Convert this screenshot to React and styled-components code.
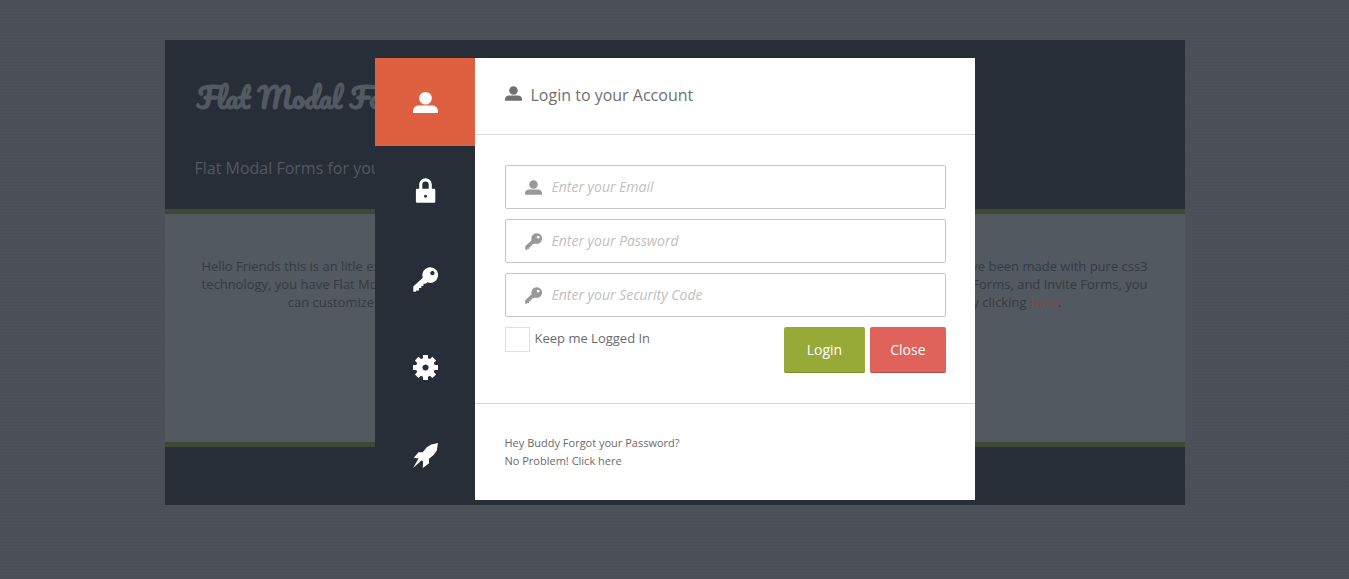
import React from "react";
import styled, { createGlobalStyle, css } from "styled-components";

const GlobalStyle = createGlobalStyle`
  * { box-sizing: border-box; }
  html { min-height: 100%; }
  body {
    margin: 0;
    min-height: 100vh;
    background-color: #4b5159;
    background-image: repeating-linear-gradient(0deg, rgba(0, 0, 0, 0.02) 0 1px, transparent 1px 3px);
    color: #343b44;
    font: 13px/18px "Open Sans", "Noto Sans", sans-serif;
  }
`;

const Page = styled.main`
  max-width: 1020px;
  margin: 40px auto;
`;

const PageHeader = styled.header`
  padding: 32px 30px 30px;
  background: #282e38;
  color: #525960;
`;

const Brand = styled.h1`
  margin: 0 0 33px;
  padding-left: 2px;
  font: 700 28px/52px Pacifico, cursive;
`;

const Tagline = styled.h2`
  margin: 0;
  font-size: 16px;
  font-weight: 400;
  line-height: 22px;
`;

const PageBody = styled.section`
  min-height: 238px;
  padding: 43px 30px;
  border: solid #3d4835;
  border-width: 5px 0;
  background: #525960;
  text-align: center;
`;

const Intro = styled.p`
  margin: 0;
`;

const IntroLink = styled.a`
  color: #78494c;
  text-decoration: none;
`;

const PageFooter = styled.footer`
  height: 58px;
  background: #282e38;
`;

const Overlay = styled.div`
  position: fixed;
  inset: 0;
  display: flex;
  justify-content: center;
  align-items: flex-start;
  padding-top: 58px;
`;

const Modal = styled.div`
  display: flex;
  width: 600px;
  max-width: 100%;
  background: #fff;
  color: #6b6b6b;
`;

const Tabs = styled.nav`
  display: flex;
  flex: 0 0 100px;
  flex-direction: column;
  background: #282e38;
`;

const Tab = styled.button`
  display: flex;
  flex: 1;
  align-items: center;
  justify-content: center;
  padding: 0 0 0 1px;
  border: 0;
  background: ${(p) => (p.$active ? "#df6041" : "transparent")};
  color: #fff;
  cursor: pointer;
`;

const Glyph = styled.svg`
  display: block;
  flex: none;
  width: ${(p) => p.$size}px;
  height: ${(p) => p.$size}px;
  fill: currentColor;
`;

const Panel = styled.section`
  flex: 1;
  min-width: 0;
`;

const PanelHeader = styled.header`
  display: flex;
  align-items: center;
  gap: 9px;
  padding: 26px 30px 28px;
  border-bottom: 1px solid #dadada;
  color: #707070;
  ${Glyph} {
    margin-bottom: 3px;
  }
`;

const PanelTitle = styled.h2`
  margin: 0;
  font-size: 16px;
  font-weight: 400;
  line-height: 22px;
`;

const Form = styled.form`
  display: flex;
  flex-direction: column;
  gap: 10px;
  padding: 30px 29px 30px 30px;
`;

const Field = styled.label`
  display: flex;
  align-items: center;
  gap: 10px;
  height: 44px;
  padding: 0 19px;
  border: 1px solid #c4c6c8;
  border-radius: 2px;
  color: #999;
`;

const Input = styled.input`
  flex: 1;
  min-width: 0;
  padding: 0;
  border: 0;
  outline: 0;
  background: none;
  color: #6b6b6b;
  font: italic 14px/18px "Open Sans", sans-serif;
  &::placeholder {
    color: #c0c0c0;
    opacity: 1;
  }
`;

const Actions = styled.div`
  display: flex;
  align-items: flex-start;
  gap: 5px;
`;

const Remember = styled.label`
  display: flex;
  gap: 5px;
  margin-right: auto;
  line-height: 22px;
`;

const Checkbox = styled.input`
  appearance: none;
  width: 25px;
  height: 25px;
  margin: 0;
  border: 1px solid #d8e2e9;
  background: #fff;
  &:checked {
    background: #97aa38;
  }
`;

const tones = {
  login: css`
    padding: 0 23px;
    background: #97aa38;
    border-color: #7d8f29;
  `,
  close: css`
    padding: 0 20px;
    background: #df625b;
    border-color: #bd4c45;
  `,
};

const Button = styled.button`
  height: 46px;
  border: 0 solid;
  border-bottom-width: 1px;
  border-radius: 2px;
  color: #fff;
  font: 14px/20px "Open Sans", sans-serif;
  cursor: pointer;
  ${(p) => tones[p.$tone]}
`;

const PanelFooter = styled.footer`
  padding: 30px;
  border-top: 1px solid #dadada;
  font-size: 11px;
`;

const FooterLine = styled.p`
  margin: 0;
`;

const FooterLink = styled.a`
  color: inherit;
  text-decoration: none;
`;

const shapes = {
  user: (
    <>
      <circle cx="12.5" cy="8.2" r="6.3" />
      <path d="M0 23v-1.500c0-3.800 2.600-6 6-6h13c3.400 0 6 2.200 6 6V23z" />
    </>
  ),
  lock: (
    <path
      fillRule="evenodd"
      d="M6.200 10.700V6.500a6.300 6.300 0 0 1 12.600 0v4.200h2.200q1.300 0 1.300 1.300v11.500q0 1.300-1.300 1.300H4.200q-1.300 0-1.300-1.300V12q0-1.300 1.300-1.300zM9.300 10.700h6.400V6.800a3.200 3.200 0 0 0-6.400 0zM12.500 16.800a1.500 1.500 0 1 0 .01 0z"
    />
  ),
  key: (
    <path
      fillRule="evenodd"
      d="M17.200.3a7.800 7.800 0 1 1-2.900 15l-1.500 1.400h-2.400v2.200H8.300v2.200H6v2.300H3.800l-1.300 1.300H.3v-5.200l9.500-8.800A7.800 7.800 0 0 1 17.200.3zM19.400 4a2.100 2.100 0 1 0 .01 0z"
    />
  ),
  gear: (
    <path
      fillRule="evenodd"
      d="M10 0h5v3.300l2 .8 2.400-2.300 3.700 3.700L20.800 8l.9 2H25v5h-3.300l-.9 2 2.300 2.500-3.700 3.600-2.400-2.300-2 .9V25h-5v-3.300l-2-.9-2.500 2.300-3.600-3.600L4.200 17l-.9-2H0v-5h3.300l.9-2-2.300-2.500 3.600-3.700L8 4.100l2-.8zM12.500 9.400a3.100 3.100 0 1 0 .01 0z"
    />
  ),
  rocket: (
    <path d="M25 0l-1.200 7.500-3 4.200-5 4.300.3 4.200-6.300 4.800.3-6.500-1.300-1.300L0 25l5.600-9.600-4.800-.6 4.700-5.500h4.200L13.800 4.200l4.500-2.700z" />
  ),
};

function Icon({ name, size = 25 }) {
  return (
    <Glyph viewBox="0 0 25 25" $size={size} aria-hidden="true">
      {shapes[name]}
    </Glyph>
  );
}

const tabs = [
  { icon: "user", label: "Login" },
  { icon: "lock", label: "Lock" },
  { icon: "key", label: "Password" },
  { icon: "gear", label: "Settings" },
  { icon: "rocket", label: "Invite" },
];

const fields = [
  { icon: "user", type: "email", placeholder: "Enter your Email" },
  { icon: "key", type: "password", placeholder: "Enter your Password" },
  { icon: "key", type: "password", placeholder: "Enter your Security Code" },
];

export default function App() {
  return (
    <>
      <GlobalStyle />
      <Page>
        <PageHeader>
          <Brand>Flat Modal Forms</Brand>
          <Tagline>Flat Modal Forms for your website</Tagline>
        </PageHeader>
        <PageBody>
          <Intro>
            Hello Friends this is an litle example of the Flat Modal Forms that you can use in all of your projects, these
            simple, nice forms have been made with pure css3 technology, you have Flat Modal Login Forms, Register Forms,
            Recover Password Forms, Settings Forms, Search Forms, Contact Forms, and Invite Forms, you can customize the
            nice colors and the icons of every form, and you can see all of the other items in my portfolio by clicking{" "}
            <IntroLink href="#portfolio">here</IntroLink>.
          </Intro>
        </PageBody>
        <PageFooter />
      </Page>
      <Overlay>
        <Modal role="dialog" aria-modal="true" aria-labelledby="login-title">
          <Tabs>
            {tabs.map((tab, i) => (
              <Tab key={tab.icon} type="button" aria-label={tab.label} $active={i === 0}>
                <Icon name={tab.icon} />
              </Tab>
            ))}
          </Tabs>
          <Panel>
            <PanelHeader>
              <Icon name="user" size={17} />
              <PanelTitle id="login-title">Login to your Account</PanelTitle>
            </PanelHeader>
            <Form onSubmit={(e) => e.preventDefault()}>
              {fields.map((f) => (
                <Field key={f.placeholder}>
                  <Icon name={f.icon} size={17} />
                  <Input type={f.type} placeholder={f.placeholder} aria-label={f.placeholder} />
                </Field>
              ))}
              <Actions>
                <Remember>
                  <Checkbox type="checkbox" />
                  Keep me Logged In
                </Remember>
                <Button type="submit" $tone="login">Login</Button>
                <Button type="button" $tone="close">Close</Button>
              </Actions>
            </Form>
            <PanelFooter>
              <FooterLine>Hey Buddy Forgot your Password?</FooterLine>
              <FooterLine>
                No Problem! <FooterLink href="#recover">Click here</FooterLink>
              </FooterLine>
            </PanelFooter>
          </Panel>
        </Modal>
      </Overlay>
    </>
  );
}
